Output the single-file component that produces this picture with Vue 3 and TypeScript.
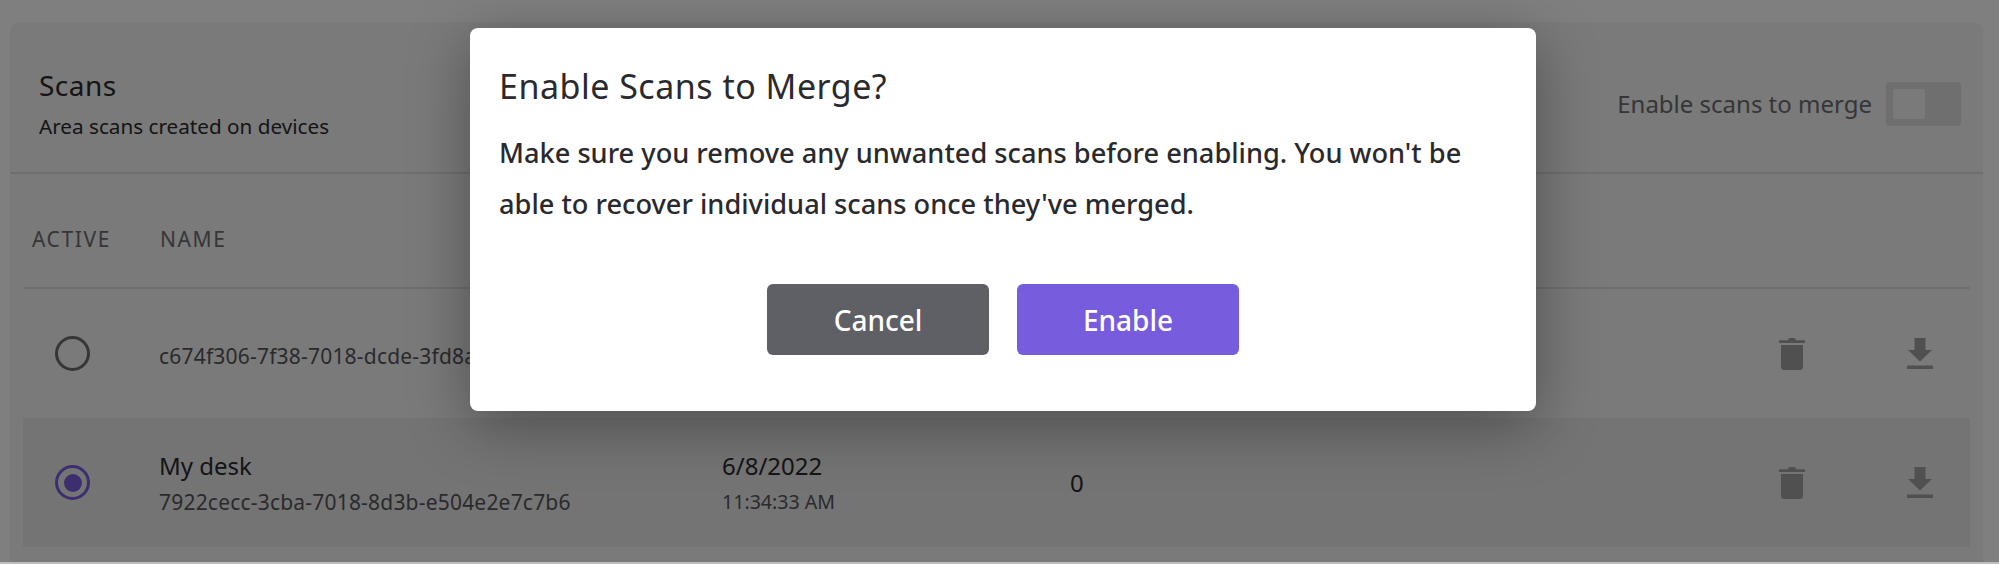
<script setup lang="ts">
type Scan = {
  id: string
  name?: string
  date?: string
  time?: string
  points?: number
  active: boolean
}

const scans: Scan[] = [
  { id: 'c674f306-7f38-7018-dcde-3fd8a1b2c4e9', active: false },
  {
    id: '7922cecc-3cba-7018-8d3b-e504e2e7c7b6',
    name: 'My desk',
    date: '6/8/2022',
    time: '11:34:33 AM',
    points: 0,
    active: true,
  },
]
</script>

<template>
  <div class="page">
    <section class="card">
      <header class="card-head">
        <div>
          <h2 class="title">Scans</h2>
          <p class="subtitle">Area scans created on devices</p>
        </div>
        <div class="merge">
          <span class="merge-label">Enable scans to merge</span>
          <span class="toggle"><span class="knob"></span></span>
        </div>
      </header>

      <div class="table">
        <div class="table-head">
          <span class="col-active">ACTIVE</span>
          <span>NAME</span>
        </div>
        <div
          v-for="scan in scans"
          :key="scan.id"
          class="row"
          :class="{ selected: scan.active }"
        >
          <span class="col-active">
            <span class="radio"><span v-if="scan.active" class="radio-dot"></span></span>
          </span>
          <div class="col-name">
            <div v-if="scan.name" class="primary">{{ scan.name }}</div>
            <div class="secondary uuid">{{ scan.id }}</div>
          </div>
          <div class="col-date">
            <div v-if="scan.date" class="primary">{{ scan.date }}</div>
            <div v-if="scan.time" class="secondary">{{ scan.time }}</div>
          </div>
          <div class="col-count primary">{{ scan.points }}</div>
          <svg class="icon trash" viewBox="0 0 26 32" width="26" height="32">
            <path d="M9 2.2C9 1 10 0 11.2 0h3.6C16 0 17 1 17 2.2H26V5H0V2.2H9ZM2 7h22v22c0 1.7-1.3 3-3 3H5c-1.7 0-3-1.3-3-3V7Z" />
          </svg>
          <svg class="icon download" viewBox="0 0 26 32" width="26" height="32">
            <path d="M7.5 0h11v12H25L13 23.5 1 12h6.5V0ZM0 27.5h26V31H0v-3.5Z" />
          </svg>
        </div>
      </div>
    </section>

    <div class="overlay">
      <div class="dialog">
        <h3 class="dialog-title">Enable Scans to Merge?</h3>
        <p class="dialog-text">
          Make sure you remove any unwanted scans before enabling. You won't be
          able to recover individual scans once they've merged.
        </p>
        <div class="dialog-actions">
          <button class="btn cancel">Cancel</button>
          <button class="btn enable">Enable</button>
        </div>
      </div>
    </div>
  </div>
</template>

<style>
html,
body {
  margin: 0;
  background: #bdbdbd;
}
</style>

<style scoped>
.page {
  position: relative;
  box-sizing: border-box;
  width: 1999px;
  height: 562px;
  overflow: hidden;
  padding: 22px 16px 0 10px;
  background: #fff;
  font-family: "Noto Sans", sans-serif;
  color: #2a2a2e;
}

.card {
  height: 540px;
  background: #f4f4f4;
  border-radius: 10px 10px 0 0;
}

.card-head {
  box-sizing: border-box;
  height: 152px;
  padding: 45px 22px 0 29px;
  display: flex;
  justify-content: space-between;
  border-bottom: 2px solid #dedede;
}

.title {
  margin: 0;
  font-size: 28px;
  font-weight: 400;
  line-height: 36px;
  letter-spacing: 0.5px;
}

.subtitle {
  margin: 9px 0 0;
  font-size: 20.7px;
  line-height: 28px;
}

.merge {
  display: flex;
  align-items: flex-start;
  gap: 14px;
  margin-top: 15px;
}

.merge-label {
  margin-top: 6px;
  font-size: 24px;
  line-height: 32px;
  color: #6c6c70;
}

.toggle {
  box-sizing: border-box;
  width: 75px;
  height: 44px;
  padding: 7px;
  background: #dedede;
  border-radius: 4px;
}

.knob {
  display: block;
  width: 32px;
  height: 30px;
  background: #f4f4f4;
  border-radius: 3px;
}

.table {
  padding: 0 13px;
}

.table-head {
  box-sizing: border-box;
  height: 115px;
  padding-top: 51px;
  display: flex;
  font-size: 21px;
  line-height: 28px;
  letter-spacing: 1.6px;
  color: #6c6c70;
  border-bottom: 2px solid #dedede;
}

.table-head .col-active {
  width: 137px;
  padding-left: 9px;
  box-sizing: border-box;
}

.row {
  height: 129px;
  display: flex;
  align-items: center;
  font-size: 20px;
}

.row.selected {
  background: #e9e9e9;
}

.row > .col-active {
  width: 136px;
  padding-left: 32px;
  box-sizing: border-box;
  flex: none;
}

.radio {
  box-sizing: border-box;
  display: flex;
  align-items: center;
  justify-content: center;
  width: 35px;
  height: 35px;
  border: 3.5px solid #6c6c70;
  border-radius: 50%;
}

.selected .radio {
  border-color: #7b5ce0;
}

.radio-dot {
  width: 18px;
  height: 18px;
  border-radius: 50%;
  background: #7b5ce0;
}

.col-name {
  width: 563px;
  flex: none;
}

.col-date {
  width: 348px;
  flex: none;
}

.col-count {
  flex: 1;
}

.primary {
  font-size: 24px;
  line-height: 34px;
}

.secondary {
  margin-top: 5px;
  font-size: 19.6px;
  line-height: 28px;
  color: #55555a;
}

.uuid {
  font-size: 21px;
  letter-spacing: 0.2px;
}

.icon {
  flex: none;
  fill: #a0a0a0;
}

.trash {
  margin-right: 102px;
}

.download {
  margin-right: 37px;
}

.overlay {
  position: absolute;
  inset: 0;
  background: rgba(0, 0, 0, 0.5);
  display: flex;
  justify-content: center;
  padding-top: 28px;
  padding-left: 7px;
  box-sizing: border-box;
}

.dialog {
  box-sizing: border-box;
  width: 1066px;
  height: 383px;
  padding: 36px 29px 0;
  background: #fff;
  border-radius: 8px;
  box-shadow: 0 14px 60px rgba(0, 0, 0, 0.35);
}

.dialog-title {
  margin: 0;
  font-size: 34px;
  font-weight: 400;
  line-height: 44px;
  letter-spacing: 0.5px;
}

.dialog-text {
  margin: 19px 0 0;
  font-size: 27.2px;
  font-weight: 500;
  line-height: 51px;
}

.dialog-actions {
  margin-top: 55px;
  display: flex;
  justify-content: center;
  gap: 28px;
}

.btn {
  width: 222px;
  height: 71px;
  border: none;
  border-radius: 6px;
  color: #fff;
  font-family: inherit;
  font-size: 28px;
  font-weight: 500;
}

.cancel {
  background: #5f6065;
}

.enable {
  background: #775ddd;
}
</style>
